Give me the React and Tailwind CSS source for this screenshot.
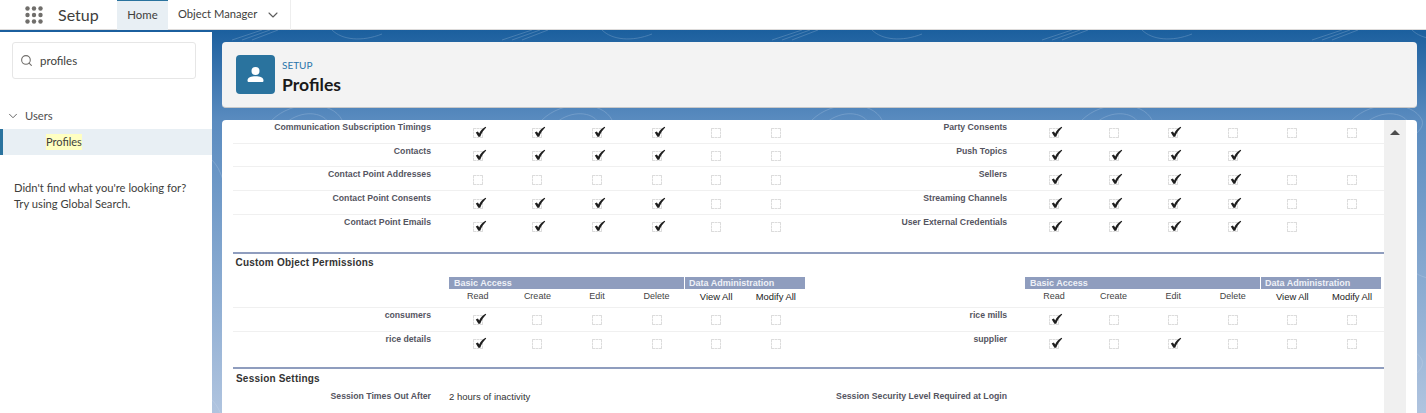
import React from "react";
import { ChevronDown, Search } from "lucide-react";

const Check = () => (
  <svg width="12" height="12" viewBox="0 0 12 12" className="absolute left-[1px] top-[-3px]">
    <path d="M0.8 6.4 L2.9 5.4 L4.2 7.4 C5.6 4.6 7.8 2.4 10.6 0.8 L11.2 1.5 C8.8 3.8 6.6 7 5.2 10.8 L3.4 10.8 Z" fill="#1f1f1f" />
  </svg>
);

const Box = ({ on }) => (
  <div className="relative h-[10px] w-[10px] rounded-[1px] border border-dashed border-[#dcdcdc]">
    {on ? <Check /> : null}
  </div>
);

// v: 1 checked, 0 empty, null none
const Cells = ({ vals }) => (
  <div className="flex w-[357.6px] shrink-0">
    {vals.map((v, i) => (
      <div key={i} className="mt-[7.5px] flex w-[59.6px] justify-center">
        {v === null ? null : <Box on={v === 1} />}
      </div>
    ))}
  </div>
);

const Half = ({ label, vals, labelW }) => (
  <div className="flex">
    <div className={`${labelW} shrink-0 pr-[17px] pt-[2px] text-right text-[8.7px] font-bold leading-[11px] text-[#55555f]`}>
      {label}
    </div>
    <Cells vals={vals} />
  </div>
);

const Row = ({ l, r, border = true }) => (
  <div className={`flex h-[23.7px] ${border ? "border-b border-[#f0f0f0]" : ""}`}>
    <Half label={l[0]} vals={l[1]} labelW="w-[215px]" />
    <Half label={r[0]} vals={r[1]} labelW="w-[218.6px]" />
  </div>
);

const A = [1, 1, 1, 1, 0, 0];
const Z = [0, 0, 0, 0, 0, 0];

const Band = () => (
  <div className="flex h-[12px] w-[356px] text-[9px] font-bold leading-[12px] text-[#eef1f7]">
    <div className="w-[234.5px] bg-[#8f9dbe] pl-[5px]">Basic Access</div>
    <div className="ml-[1px] w-[120.5px] bg-[#8f9dbe] pl-[4.5px]">Data Administration</div>
  </div>
);

const COLS = ["Read", "Create", "Edit", "Delete", "View All", "Modify All"];
const Heads = () => (
  <div className="flex w-[357.6px]">
    {COLS.map((c, i) => (
      <div key={c} className={`w-[59.6px] text-center leading-[15px] ${i > 3 ? "text-[9.4px] text-[#222]" : "text-[9px] text-[#444]"}`}>
        {c}
      </div>
    ))}
  </div>
);

const Topo = () => (
  <svg className="absolute inset-0 h-full w-full opacity-30" preserveAspectRatio="none">
    <defs>
      <pattern id="topo" width="270" height="240" patternUnits="userSpaceOnUse">
        <g fill="none" stroke="#dbe7f5" strokeWidth="0.7">
          <path d="M20 10 L50 0 M30 10 L58 0 M40 10 L66 0 M120 0 C130 10 150 12 170 4" />
          <path d="M60 90 C80 70 120 70 130 90 C135 105 100 120 70 110 C55 105 55 98 60 90Z" />
          <path d="M75 92 C90 80 110 82 116 92 C118 100 95 106 80 102Z" />
          <path d="M170 90 C175 110 200 115 230 105 M240 90 C245 105 260 110 270 105" />
          <path d="M0 130 C20 150 10 190 30 210 M140 140 C180 150 200 130 240 160" />
          <path d="M60 170 C90 160 110 200 90 220 C70 235 45 210 60 170Z" />
        </g>
      </pattern>
    </defs>
    <rect width="100%" height="100%" fill="url(#topo)" />
  </svg>
);

export default function App() {
  return (
    <div className="flex h-[413px] w-[1426px] flex-col overflow-hidden bg-white font-['Lato',sans-serif] text-[#3e3e3c]">
      {/* Top bar */}
      <div className="flex h-[30px] shrink-0 items-center border-b border-[#dddbda] bg-white">
        <svg width="18" height="18" viewBox="0 0 18 18" className="ml-[25px]" fill="#706e6b">
          {[2.5, 9, 15.5].map((y) =>
            [2.5, 9, 15.5].map((x) => <circle key={`${x}-${y}`} cx={x} cy={y} r="2.2" />)
          )}
        </svg>
        <div className="ml-[15px] w-[59px] text-[16px] leading-[30px] text-[#3e3e3c]">Setup</div>
        <div className="flex h-[30px] w-[51px] items-center justify-center border-t border-[#2a739e] bg-[#e8eff4] text-[11.4px]">Home</div>
        <div className="flex h-[30px] w-[123px] items-center whitespace-nowrap border-r border-[#eeeeee] pl-[10px] text-[11.2px]">
          Object Manager
          <ChevronDown size={16} strokeWidth={1.6} className="ml-[8px] text-[#5c5c5c]" />
        </div>
      </div>

      <div className="relative flex min-h-0 flex-1">
        {/* Sidebar */}
        <aside className="z-10 w-[212px] shrink-0 border-t-2 border-[#1b5f9e] bg-white">
          <div className="mx-[12px] mt-[10px] flex h-[37px] w-[184px] items-center rounded-[3px] border border-[#e6e6e6] pl-[7px] text-[11.5px]">
            <Search size={13} strokeWidth={2} className="text-[#706e6b]" />
            <span className="ml-[7px]">profiles</span>
          </div>
          <div className="mt-[27px] flex h-[20px] items-center pl-[6px] text-[11.2px]">
            <ChevronDown size={14} strokeWidth={1.6} className="text-[#5c5c5c]" />
            <span className="ml-[5px] text-[#4f4f4f]">Users</span>
          </div>
          <div className="mt-[3px] flex h-[26px] items-center border-l-[3px] border-[#2a739e] bg-[#e8eff4] pl-[43px] text-[11px]">
            <span className="bg-[#ffffc2]">Profiles</span>
          </div>
          <div className="mt-[25px] pl-[14px] text-[11.2px] leading-[16px] text-[#3e3e3c]">
            <div>Didn't find what you're looking for?</div>
            <div>Try using Global Search.</div>
          </div>
        </aside>

        {/* Main */}
        <main className="relative min-w-0 flex-1 bg-[linear-gradient(to_bottom,#1b5f9e_0%,#5b8cc0_24%,#b0c4df_100%)]">
          <Topo />
          <div className="relative px-[10px] pr-[9px] pt-[12px]">
            <div className="flex h-[66px] items-center rounded-[4px] border-b border-[#c9c9c9] bg-[#f3f3f3] pl-[14px]">
              <div className="flex h-[39px] w-[39px] items-center justify-center rounded-[4px] bg-[#2a739e]">
                <svg width="19" height="19" viewBox="0 0 19 19" fill="#fff">
                  <circle cx="9.5" cy="6" r="4" />
                  <path d="M1.5 15.5 C1.5 12.5 5 11.3 9.5 11.3 C14 11.3 17.5 12.5 17.5 15.5 C17.5 16.5 17 17 16 17 H3 C2 17 1.5 16.5 1.5 15.5Z" />
                </svg>
              </div>
              <div className="ml-[7px] pt-[5px]">
                <div className="text-[10px] leading-[13px] text-[#2a75ab]">SETUP</div>
                <div className="mt-[1px] text-[17.6px] font-bold leading-[23px] text-[#1a1a1a]">Profiles</div>
              </div>
            </div>

            {/* Content */}
            <div className="mt-[12px] flex h-[293px] overflow-hidden rounded-t-[4px] bg-white pl-[11px] font-['Liberation_Sans',sans-serif]">
              <div className="w-[1151px] shrink-0">
                <Row l={["Communication Subscription Timings", A]} r={["Party Consents", [1, 0, 1, 0, 0, 0]]} />
                <Row l={["Contacts", A]} r={["Push Topics", [1, 1, 1, 1, null, null]]} />
                <Row l={["Contact Point Addresses", Z]} r={["Sellers", A]} />
                <Row l={["Contact Point Consents", A]} r={["Streaming Channels", A]} />
                <Row l={["Contact Point Emails", A]} r={["User External Credentials", [1, 1, 1, 1, 0, null]]} border={false} />

                <div className="mt-[13.5px] border-t-[2px] border-[#8f9dbe] pl-[2.5px] pt-[2px] text-[10px] font-bold leading-[14px] tracking-[0.2px] text-[#333]">
                  Custom Object Permissions
                </div>
                <div className="mt-[7px] flex">
                  <div className="ml-[216px]"><Band /></div>
                  <div className="ml-[220px]"><Band /></div>
                </div>
                <div className="flex h-[19px] border-b border-[#f0f0f0]">
                  <div className="ml-[215px]"><Heads /></div>
                  <div className="ml-[218.6px]"><Heads /></div>
                </div>
                <Row l={["consumers", [1, 0, 0, 0, 0, 0]]} r={["rice mills", [1, 0, 0, 0, 0, 0]]} />
                <Row l={["rice details", [1, 0, 0, 0, 0, 0]]} r={["supplier", [1, 0, 1, 0, 0, 0]]} border={false} />

                <div className="mt-[12px] border-t-[2px] border-[#8f9dbe] pl-[3px] pt-[3px] text-[10px] font-bold leading-[14px] tracking-[0.2px] text-[#333]">
                  Session Settings
                </div>
                <div className="mt-[5px] flex text-[8.7px] leading-[11px]">
                  <div className="w-[198px] text-right font-bold text-[#55555f]">Session Times Out After</div>
                  <div className="ml-[18px] w-[183px] text-[9.5px] text-[#333]">2 hours of inactivity</div>
                  <div className="w-[375px] text-right font-bold text-[#55555f]">Session Security Level Required at Login</div>
                </div>
              </div>
              <div className="w-[22px] shrink-0 bg-[#f0f0f0] pl-[6px] pt-[10px]">
                <div className="h-0 w-0 border-x-[5px] border-b-[5px] border-x-transparent border-b-[#4d4d4d]" />
              </div>
            </div>
          </div>
        </main>
      </div>
    </div>
  );
}
